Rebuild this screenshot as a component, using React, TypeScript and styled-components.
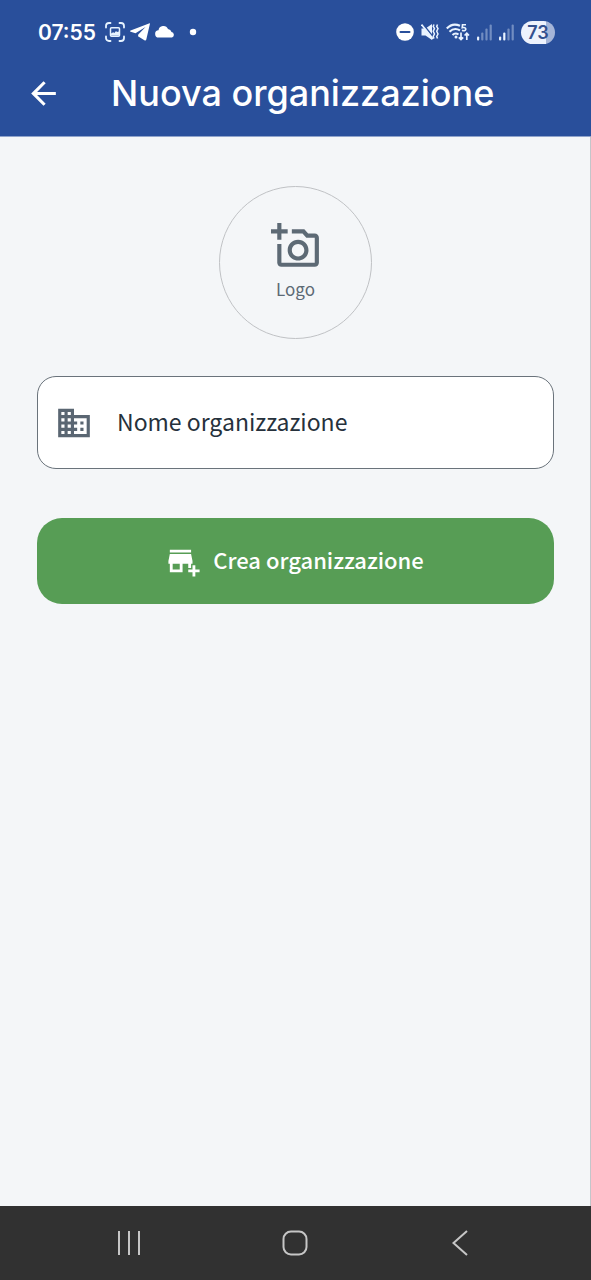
import React from "react";
import styled, { createGlobalStyle } from "styled-components";
import { MdAddBusiness, MdArrowBack, MdBusiness, MdOutlineAddAPhoto } from "react-icons/md";

const bodyFont = `"Noto Sans CJK SC", "Noto Sans", sans-serif`;
const titleFont = `Inter, "Noto Sans", sans-serif`;

const GlobalStyle = createGlobalStyle`
  *, *::before, *::after { box-sizing: border-box; }
  body { margin: 0; background: #f4f6f8; font-family: ${bodyFont}; }
  button, input { font: inherit; }
`;

const Screen = styled.div`
  min-height: 100vh;
  display: flex;
  flex-direction: column;
  background: #f4f6f8;
`;

const TopArea = styled.header`
  background: #294f9b;
  color: #fff;
  border-bottom: 1px solid #8fa3cb;
`;

const StatusBar = styled.div`
  height: 64px;
  padding: 0 36px 0 38px;
  display: flex;
  align-items: center;
  justify-content: space-between;
`;

const StatusGroup = styled.div<{ $gap: number }>`
  display: flex;
  align-items: center;
  gap: ${({ $gap }) => $gap}px;
`;

const Clock = styled.time`
  padding-top: 2px;
  margin-right: 4px;
  font: 600 21px/28px ${titleFont};
`;

const Battery = styled.span`
  width: 34px;
  height: 23px;
  border-radius: 12px;
  background: linear-gradient(to right, #edf2fd 73%, #a5b5d8 73%);
  color: #33508f;
  font: 600 18px/23px ${titleFont};
  text-align: center;
`;

const AppBar = styled.div`
  height: 72px;
  padding: 0 24px;
  display: flex;
  align-items: flex-start;
  gap: 49px;
`;

const BackButton = styled.button`
  width: 38px;
  height: 58px;
  padding: 0;
  border: 0;
  background: none;
  color: inherit;
  display: grid;
  place-items: center;
`;

const Title = styled.h1`
  margin: 0;
  font: 500 36px/58px ${titleFont};
  white-space: nowrap;
`;

const Main = styled.main`
  flex: 1;
  padding: 49px 36px 49px 37px;
  border-right: 1px solid #c3c6ca;
`;

const Form = styled.form`
  display: flex;
  flex-direction: column;
`;

const LogoButton = styled.button`
  align-self: center;
  width: 153px;
  height: 153px;
  margin-bottom: 37px;
  padding: 0 0 2px;
  border: 1px solid #c0c2c5;
  border-radius: 50%;
  background: none;
  color: #5d6a75;
  display: flex;
  flex-direction: column;
  align-items: center;
  justify-content: center;
  gap: 5px;
  font-size: 17px;
  line-height: 26px;
`;

const Field = styled.label`
  height: 93px;
  padding: 0 17px;
  margin-bottom: 49px;
  border: 1px solid #6a737b;
  border-radius: 19px;
  background: #fff;
  color: #5a6672;
  display: flex;
  align-items: center;
  gap: 24px;
`;

const FieldInput = styled.input`
  flex: 1;
  min-width: 0;
  padding: 0 0 3px;
  border: 0;
  outline: 0;
  background: none;
  color: #1f2a36;
  font-size: 23px;
  line-height: 36px;

  &::placeholder {
    color: #26313c;
    opacity: 1;
  }
`;

const SubmitButton = styled.button`
  height: 86px;
  padding: 0;
  border: 0;
  border-radius: 25px;
  background: #579d55;
  color: #fff;
  display: flex;
  align-items: center;
  justify-content: center;
  gap: 12px;
  font-size: 22px;
  font-weight: 500;
  line-height: 34px;
`;

const SubmitText = styled.span`
  padding-bottom: 4px;
`;

const NavBar = styled.nav`
  height: 74px;
  padding: 0 48px 0 46px;
  background: #313131;
  display: flex;
  align-items: center;
`;

const NavButton = styled.button`
  flex: 1;
  height: 100%;
  padding: 0;
  border: 0;
  background: none;
  color: #c6c6c6;
  display: grid;
  place-items: center;
`;

const CaptureIcon = () => (
  <svg width="20" height="20" viewBox="0 0 20 20" fill="none" stroke="#e6f3ff" strokeWidth="1.8" strokeLinecap="round">
    <path d="M1 5.500V4a3 3 0 0 1 3-3h1.500M14.500 1H16a3 3 0 0 1 3 3v1.500M19 14.500V16a3 3 0 0 1-3 3h-1.500M5.500 19H4a3 3 0 0 1-3-3v-1.500" />
    <rect x="5.500" y="5.800" width="9" height="8.400" rx="1" strokeWidth="1.500" />
    <path d="M6 13.500v-2l2.200-1.200 1.200.7 1.600-2 1 1 2-.5v4z" fill="#e6f3ff" stroke="none" />
  </svg>
);

const TelegramIcon = () => (
  <svg width="20" height="18" viewBox="0 0 20 18" fill="#fff">
    <path d="M19.600.3.600 7.500c-.8.400-.7 1 .1 1.300l4.800 1.500L15.500 4 8.300 11.600 8 13.300l6.400 3.900c1 .5 1.600.3 1.900-.8L19.900 1c.1-.6 0-.8-.3-.7z" />
  </svg>
);

const CloudIcon = () => (
  <svg width="20" height="12" viewBox="0 0 20 12" fill="#fff">
    <path d="M4 11.500a3.600 3.600 0 0 1-.5-7.200A5 5 0 0 1 13 3a4 4 0 0 1 3.500 3.100 2.800 2.800 0 0 1 .5 5.400z" />
  </svg>
);

const DotIcon = () => (
  <svg width="26" height="8" viewBox="0 0 26 8" fill="#fff">
    <circle cx="13" cy="4" r="3.200" />
  </svg>
);

const DoNotDisturbIcon = () => (
  <svg width="18" height="18" viewBox="0 0 18 18">
    <circle cx="9" cy="9" r="8.800" fill="#fff" />
    <path d="M4.500 9h9" stroke="#294f9b" strokeWidth="2" strokeLinecap="round" />
  </svg>
);

const VibrateIcon = () => (
  <svg width="18" height="18" viewBox="0 0 18 18" fill="none" stroke="#e9f3ff">
    <path d="M.5 5.500h4L11 1v16l-6.500-4.500h-4z" fill="#e9f3ff" stroke="none" />
    <path d="M1.500.5 13 15" stroke="#294f9b" strokeWidth="1.600" />
    <path d="M.5 1.500 12 16" strokeWidth="1.800" />
    <path d="m13 1.500-.8 2 1.300 2-1.300 2.800 1.300 2.700-1.300 2.500.8 2M16.500 1.500l-.8 2 1.300 2-1.300 2.800 1.300 2.700-1.300 2.500.8 2" strokeWidth="1.500" />
  </svg>
);

const WifiIcon = () => (
  <svg width="24" height="18" viewBox="0 0 24 18" fill="none" stroke="#e9f3ff" strokeWidth="2.100">
    <path d="M.8 5.500C4.500 1.500 9.500.8 14 2.800M3.500 8.800c3-3 7-3.500 10.500-1.400M6.500 12c1.800-1.800 4-1.900 6-.5" />
    <circle cx="10" cy="14" r="1.500" fill="#e9f3ff" stroke="none" />
    <path d="M20 1.800h-3.500l-.3 2.900c2-.6 3.800.1 3.600 1.600-.2 1.500-2.200 1.800-3.800.9" strokeWidth="1.600" />
    <path d="M15 9.500v7M12.800 14.300l2.200 2.300 2.200-2.300M20.800 17v-6.500M18.600 12.500l2.200-2.300 2.200 2.300" strokeWidth="1.700" />
  </svg>
);

const SignalIcon = ({ level }: { level: number }) => (
  <svg width="15" height="17" viewBox="0 0 15 17" fill="#e9f3ff">
    {[4, 8, 12, 16].map((height, i) => (
      <rect key={height} x={i * 4.2} y={16.500 - height} width="2.200" height={height} rx="1" opacity={i < level ? 1 : 0.38} />
    ))}
  </svg>
);

export default function App() {
  return (
    <Screen>
      <GlobalStyle />
      <TopArea>
        <StatusBar>
          <StatusGroup $gap={5}>
            <Clock>07:55</Clock>
            <CaptureIcon />
            <TelegramIcon />
            <CloudIcon />
            <DotIcon />
          </StatusGroup>
          <StatusGroup $gap={7}>
            <DoNotDisturbIcon />
            <VibrateIcon />
            <WifiIcon />
            <SignalIcon level={1} />
            <SignalIcon level={2} />
            <Battery>73</Battery>
          </StatusGroup>
        </StatusBar>
        <AppBar>
          <BackButton type="button" aria-label="Indietro">
            <MdArrowBack size={37} />
          </BackButton>
          <Title>Nuova organizzazione</Title>
        </AppBar>
      </TopArea>
      <Main>
        <Form onSubmit={(event) => event.preventDefault()}>
          <LogoButton type="button">
            <MdOutlineAddAPhoto size={50} />
            Logo
          </LogoButton>
          <Field>
            <MdBusiness size={38} />
            <FieldInput type="text" name="nome" aria-label="Nome organizzazione" placeholder="Nome organizzazione" />
          </Field>
          <SubmitButton type="submit">
            <MdAddBusiness size={34} />
            <SubmitText>Crea organizzazione</SubmitText>
          </SubmitButton>
        </Form>
      </Main>
      <NavBar>
        <NavButton type="button" aria-label="Recenti">
          <svg width="24" height="24" viewBox="0 0 24 24" stroke="currentColor" strokeWidth="2">
            <path d="M2 0v24M12 0v24M22 0v24" />
          </svg>
        </NavButton>
        <NavButton type="button" aria-label="Home">
          <svg width="26" height="26" viewBox="0 0 26 26" fill="none" stroke="currentColor" strokeWidth="2">
            <rect x="1.500" y="1.500" width="23" height="23" rx="7.500" />
          </svg>
        </NavButton>
        <NavButton type="button" aria-label="Indietro di sistema">
          <svg width="16" height="26" viewBox="0 0 16 26" fill="none" stroke="currentColor" strokeWidth="2">
            <path d="M15 1 1.500 13 15 25" />
          </svg>
        </NavButton>
      </NavBar>
    </Screen>
  );
}
